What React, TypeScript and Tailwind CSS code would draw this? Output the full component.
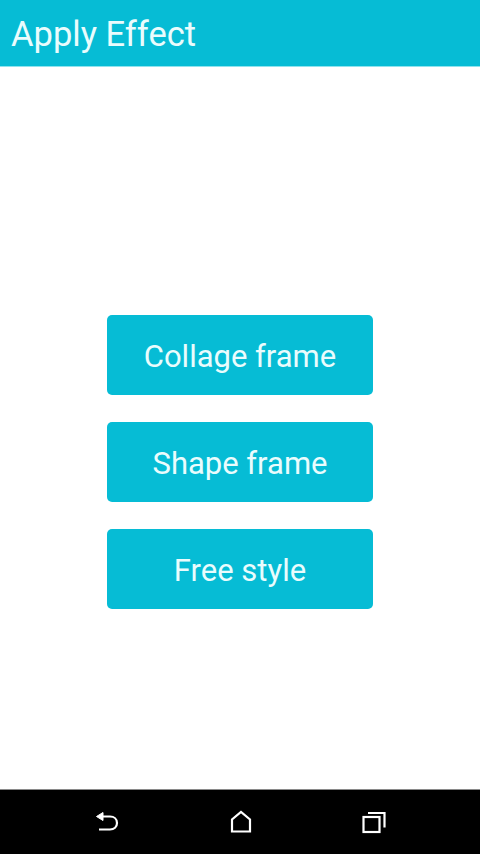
const buttons = ["Collage frame", "Shape frame", "Free style"];

export default function App() {
  return (
    <div className="flex h-[854px] w-[480px] flex-col overflow-hidden bg-white font-['Roboto',sans-serif]">
      <header className="flex h-[67px] shrink-0 items-center border-b border-b-[#8fe3ee] bg-[#06bcd5] pt-[4px] pl-[11px] text-[34.5px] text-[#eafcfd]">
        Apply Effect
      </header>

      <main className="flex flex-1 flex-col items-center gap-[27.5px] pt-[248px]">
        {buttons.map((label) => (
          <button
            key={label}
            className="flex h-[79.5px] w-[266px] items-center justify-center rounded-[5px] bg-[#06bcd5] pt-[4px] text-[31px] text-[#eafcfd]"
          >
            {label}
          </button>
        ))}
      </main>

      <nav className="flex h-[65px] shrink-0 items-center border-t border-t-[#8a8a8a] bg-black pb-[1px]">
        <div className="flex w-full items-center justify-between px-[94px]">
          <svg width="26" height="26" viewBox="0 0 26 26" fill="none" stroke="white" strokeWidth="2.2">
            <path d="M6 7.5 H16 C20 7.5 23 10 23 14 C23 18 20 20.5 16 20.5 H5" />
            <path d="M2.5 7.5 L9 3.5 V11.5 Z" fill="white" strokeWidth="1" strokeLinejoin="round" />
          </svg>
          <svg width="22" height="26" viewBox="0 0 22 26" fill="none" stroke="white" strokeWidth="2.2">
            <path d="M2 22.5 V10.5 L11 3 L20 10.5 V22.5 Z" />
          </svg>
          <svg width="24" height="26" viewBox="0 0 24 26" fill="none" stroke="white" strokeWidth="2.2">
            <rect x="1.5" y="8" width="16" height="15" />
            <path d="M6 4 H22.5 V18.5" />
          </svg>
        </div>
      </nav>
    </div>
  );
}
